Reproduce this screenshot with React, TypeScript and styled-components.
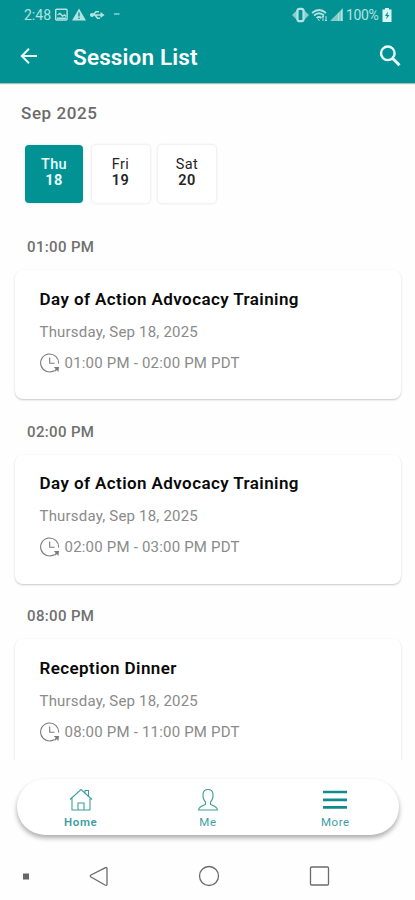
import React from "react";
import styled, { createGlobalStyle } from "styled-components";

const TEAL = "#029294";

const GlobalStyle = createGlobalStyle`
  * { box-sizing: border-box; }
  body { margin: 0; background: #fefefe; font-family: Roboto, sans-serif; }
`;

const Screen = styled.div`
  width: 415px;
  height: 900px;
  display: flex;
  flex-direction: column;
  overflow: hidden;
  background: #fefefe;
`;

const Header = styled.header`
  flex: none;
  height: 83px;
  background: ${TEAL};
  color: #fff;
  box-shadow: 0 1px 1px rgba(0, 70, 70, 0.35);
`;

const StatusBar = styled.div`
  height: 30px;
  padding: 0 23px 0 24px;
  display: flex;
  align-items: center;
  justify-content: space-between;
  color: #b4e2e0;
`;

const StatusGroup = styled.div<{ $gap: number }>`
  display: flex;
  align-items: center;
  gap: ${(p) => p.$gap}px;
  height: 30px;
`;

const AppBar = styled.div`
  height: 53px;
  padding: 0 14px 0 19px;
  display: flex;
  align-items: center;
`;

const IconButton = styled.button`
  display: flex;
  padding: 0 0 1px;
  border: 0;
  background: none;
  color: #eaffff;
`;

const Label = styled.span<{ $width: number; $spacing?: number }>`
  display: block;
  width: ${(p) => p.$width}px;
  font-size: 14px;
  letter-spacing: ${(p) => p.$spacing ?? 0}px;
  line-height: 20px;
  white-space: nowrap;
`;

const PageTitle = styled.h1`
  flex: 1;
  margin: 0 0 0 34px;
  font-size: 22.5px;
  line-height: 26px;
  font-weight: 600;
  letter-spacing: 0.15px;
`;

const Content = styled.main`
  flex: none;
  height: 677px;
  overflow: hidden;
  padding: 20px 14px 0;
`;

const Month = styled.h2`
  margin: 0 0 0 7px;
  font-size: 17px;
  line-height: 20px;
  font-weight: 500;
  letter-spacing: 0.6px;
  color: #6a6a6a;
`;

const Days = styled.div`
  display: flex;
  gap: 8.5px;
  margin: 22px 0 34px 11px;
`;

const Day = styled.button<{ $active?: boolean }>`
  width: 58px;
  height: 58px;
  padding: 2px 0 4px;
  border: 0;
  border-radius: 4px;
  display: flex;
  flex-direction: column;
  align-items: center;
  justify-content: center;
  font: 400 14.5px/16px Roboto, sans-serif;
  letter-spacing: 0.4px;
  color: ${(p) => (p.$active ? "#e9ffff" : "#252525")};
  background: ${(p) => (p.$active ? TEAL : "#fff")};
  box-shadow: 0 0 3px rgba(0, 0, 0, 0.14);

  span { font-weight: ${(p) => (p.$active ? 500 : 400)}; }
  strong { font-weight: ${(p) => (p.$active ? 700 : 600)}; }
`;

const Slot = styled.section`
  height: 184.6px;
`;

const SlotTime = styled.h3`
  margin: 0 0 13px 13px;
  font-size: 15px;
  line-height: 20px;
  font-weight: 500;
  letter-spacing: 0.35px;
  color: #707070;
`;

const Card = styled.article`
  height: 129.4px;
  margin: 0 0 0 1px;
  padding: 17.6px 25px;
  border-radius: 8px;
  background: #fff;
  box-shadow: 0 1px 2px rgba(0, 0, 0, 0.22);
`;

const CardTitle = styled.h4`
  margin: 0 0 0 -0.5px;
  font-size: 17px;
  line-height: 22px;
  font-weight: 600;
  letter-spacing: 0.41px;
  color: #090909;
  white-space: nowrap;
`;

const CardText = styled.p`
  display: flex;
  align-items: center;
  gap: 5px;
  height: 20px;
  margin: 12px 0 0 -0.5px;
  font-size: 15px;
  line-height: 20px;
  letter-spacing: 0.2px;
  color: #8a8a8a;
  white-space: nowrap;
`;

const TimeRow = styled(CardText)`
  margin-top: 11px;
`;

const TabBar = styled.nav`
  flex: none;
  height: 56px;
  margin: 19px 16px 0 17px;
  padding: 0;
  display: grid;
  grid-template-columns: repeat(3, 1fr);
  border-radius: 28px;
  background: #fff;
  box-shadow: 0 3px 5px rgba(0, 0, 0, 0.33);
`;

const Tab = styled.button<{ $active?: boolean }>`
  display: flex;
  flex-direction: column;
  align-items: center;
  padding: 9px 0 0;
  gap: 3px;
  border: 0;
  background: none;
  color: #3c9f9f;
  font: ${(p) => (p.$active ? 600 : 400)} 11.5px/14px Roboto, sans-serif;
  letter-spacing: 0.6px;
`;

const SystemNav = styled.div`
  flex: none;
  height: 65px;
  padding: 18px 84px 0 22px;
  display: flex;
  justify-content: space-between;
  align-items: flex-start;
`;

const ClockIcon = () => (
  <svg width="20" height="20" viewBox="0 0 20 20" fill="none" stroke="#7b7b7b" strokeWidth="1.1">
    <path d="M18.6 10.5A9 9 0 1 0 14 17.8M9.7 4.5V10.2H14.5" />
    <path d="M13.8 14H19L18.4 19Z" fill="#7b7b7b" stroke="none" />
    <path d="M14.5 18.2L17.8 15.2" strokeWidth="1.4" />
  </svg>
);

const sessions = [
  { title: "Day of Action Advocacy Training", start: "01:00 PM", end: "02:00 PM" },
  { title: "Day of Action Advocacy Training", start: "02:00 PM", end: "03:00 PM" },
  { title: "Reception Dinner", start: "08:00 PM", end: "11:00 PM" },
];

export default function App() {
  return (
    <>
      <GlobalStyle />
      <Screen>
        <Header>
          <StatusBar>
            <StatusGroup $gap={5}>
              <Label $width={26}>2:48</Label>
              <svg width="68" height="14" viewBox="0 0 68 14" fill="none" stroke="currentColor" strokeWidth="1.4">
                <rect x="0.7" y="1.2" width="11.4" height="10.8" rx="1" />
                <path d="M2.5 7L5 5.5L7.5 8L9.5 6.8L11 8.5M2 10.2H11" />
                <path d="M24 .5L31 12.5H17Z" fill="currentColor" stroke="none" />
                <path d="M24 4.5V8.5M24 9.7V11" stroke={TEAL} />
                <path d="M35 7H47M38 7L41 3.7H44M40 7L42.5 10.3H45" strokeWidth="1.6" />
                <circle cx="37" cy="7" r="2" fill="currentColor" stroke="none" />
                <path d="M45.5 4L49.5 7L45.5 10Z" fill="currentColor" stroke="none" />
                <path d="M59 6H64.5" strokeWidth="1.2" />
              </svg>
            </StatusGroup>
            <StatusGroup $gap={3}>
              <svg width="52" height="16" viewBox="0 0 52 16" fill="none" stroke="currentColor">
                <path d="M6 3L1 8L6 13ZM13 3L18 8L13 13Z" fill="currentColor" stroke="none" opacity=".75" />
                <rect x="6.5" y="1.8" width="6" height="12.4" rx="2" strokeWidth="2.2" />
                <path d="M21 6Q28 0 35 6M23 8.5Q28 4 33 8.5M25.5 11Q28 9 30.5 11" strokeWidth="1.7" />
                <path d="M27 12L28.5 14M32 9V14M35 9V14M31 10L32 9L33 10M34 13L35 14L36 13" strokeWidth="1" />
                <path d="M39 14L52 1V14Z" fill="currentColor" stroke="none" opacity=".72" />
                <path d="M47.5 6V14M50.5 3V14" strokeWidth="1" />
              </svg>
              <Label $width={33} $spacing={-0.35}>100%</Label>
              <svg width="10" height="14" viewBox="0 0 10 14">
                <path d="M3 0H7V1.5H9.5V14H.5V1.5H3Z" fill="#d9f6f3" />
                <path d="M6 3.5L3 8H5L4 11.5L7.5 7H5.5Z" fill={TEAL} />
              </svg>
            </StatusGroup>
          </StatusBar>
          <AppBar>
            <IconButton aria-label="Back">
              <svg width="20" height="20" viewBox="0 0 20 20" fill="none" stroke="currentColor" strokeWidth="2">
                <path d="M18 10H3M10 2.8L2.8 10L10 17.2" />
              </svg>
            </IconButton>
            <PageTitle>Session List</PageTitle>
            <IconButton aria-label="Search">
              <svg width="22" height="22" viewBox="0 0 22 22" fill="none" stroke="currentColor" strokeWidth="2.4">
                <circle cx="8.8" cy="8.3" r="6.8" />
                <path d="M13.5 13.3L20.5 20.3" strokeWidth="3" />
              </svg>
            </IconButton>
          </AppBar>
        </Header>
        <Content>
          <Month>Sep 2025</Month>
          <Days>
            <Day $active><span>Thu</span><strong>18</strong></Day>
            <Day><span>Fri</span><strong>19</strong></Day>
            <Day><span>Sat</span><strong>20</strong></Day>
          </Days>
          {sessions.map((s) => (
            <Slot key={s.start}>
              <SlotTime>{s.start}</SlotTime>
              <Card>
                <CardTitle>{s.title}</CardTitle>
                <CardText>Thursday, Sep 18, 2025</CardText>
                <TimeRow><ClockIcon /><span>{s.start} - {s.end} PDT</span></TimeRow>
              </Card>
            </Slot>
          ))}
        </Content>
        <TabBar>
          <Tab $active>
            <svg width="24" height="24" viewBox="0 0 24 24" fill="none" stroke="currentColor" strokeWidth="1.1">
              <path d="M1 11.5L12 1.5L23 11.5M3 10V22H21V10M9 22V15H15V22M16 5V2.5H19.5V8" />
            </svg>
            <span>Home</span>
          </Tab>
          <Tab>
            <svg width="24" height="24" viewBox="0 0 24 24" fill="none" stroke="currentColor" strokeWidth="1.1">
              <path d="M9.5 14C7.5 12 6.8 9 7 6C7.3 3 9 1.5 12 1.5S16.7 3 17 6C17.2 9 16.5 12 14.5 14V16.5C17 17.8 21 18.4 21.5 22H2.5C3 18.4 7 17.8 9.5 16.5Z" />
            </svg>
            <span>Me</span>
          </Tab>
          <Tab>
            <svg width="24" height="24" viewBox="0 0 24 24" stroke="#108b8e" strokeWidth="2.7">
              <path d="M0 4H24M0 11.8H24M0 19.3H24" />
            </svg>
            <span>More</span>
          </Tab>
        </TabBar>
        <SystemNav>
          <svg width="308" height="46" viewBox="0 0 308 46" fill="none" stroke="#6b6b6b" strokeWidth="1.3">
            <rect x="1" y="20.5" width="6" height="6" fill="#666" stroke="none" />
            <path d="M83 14.8L69 22Q67.5 23 69 24L83 32Q85 33 85 31V15.5Q85 14 83 14.8Z" />
            <circle cx="187" cy="23" r="9.5" />
            <rect x="288.5" y="14" width="18" height="18" rx="1" />
          </svg>
        </SystemNav>
      </Screen>
    </>
  );
}
